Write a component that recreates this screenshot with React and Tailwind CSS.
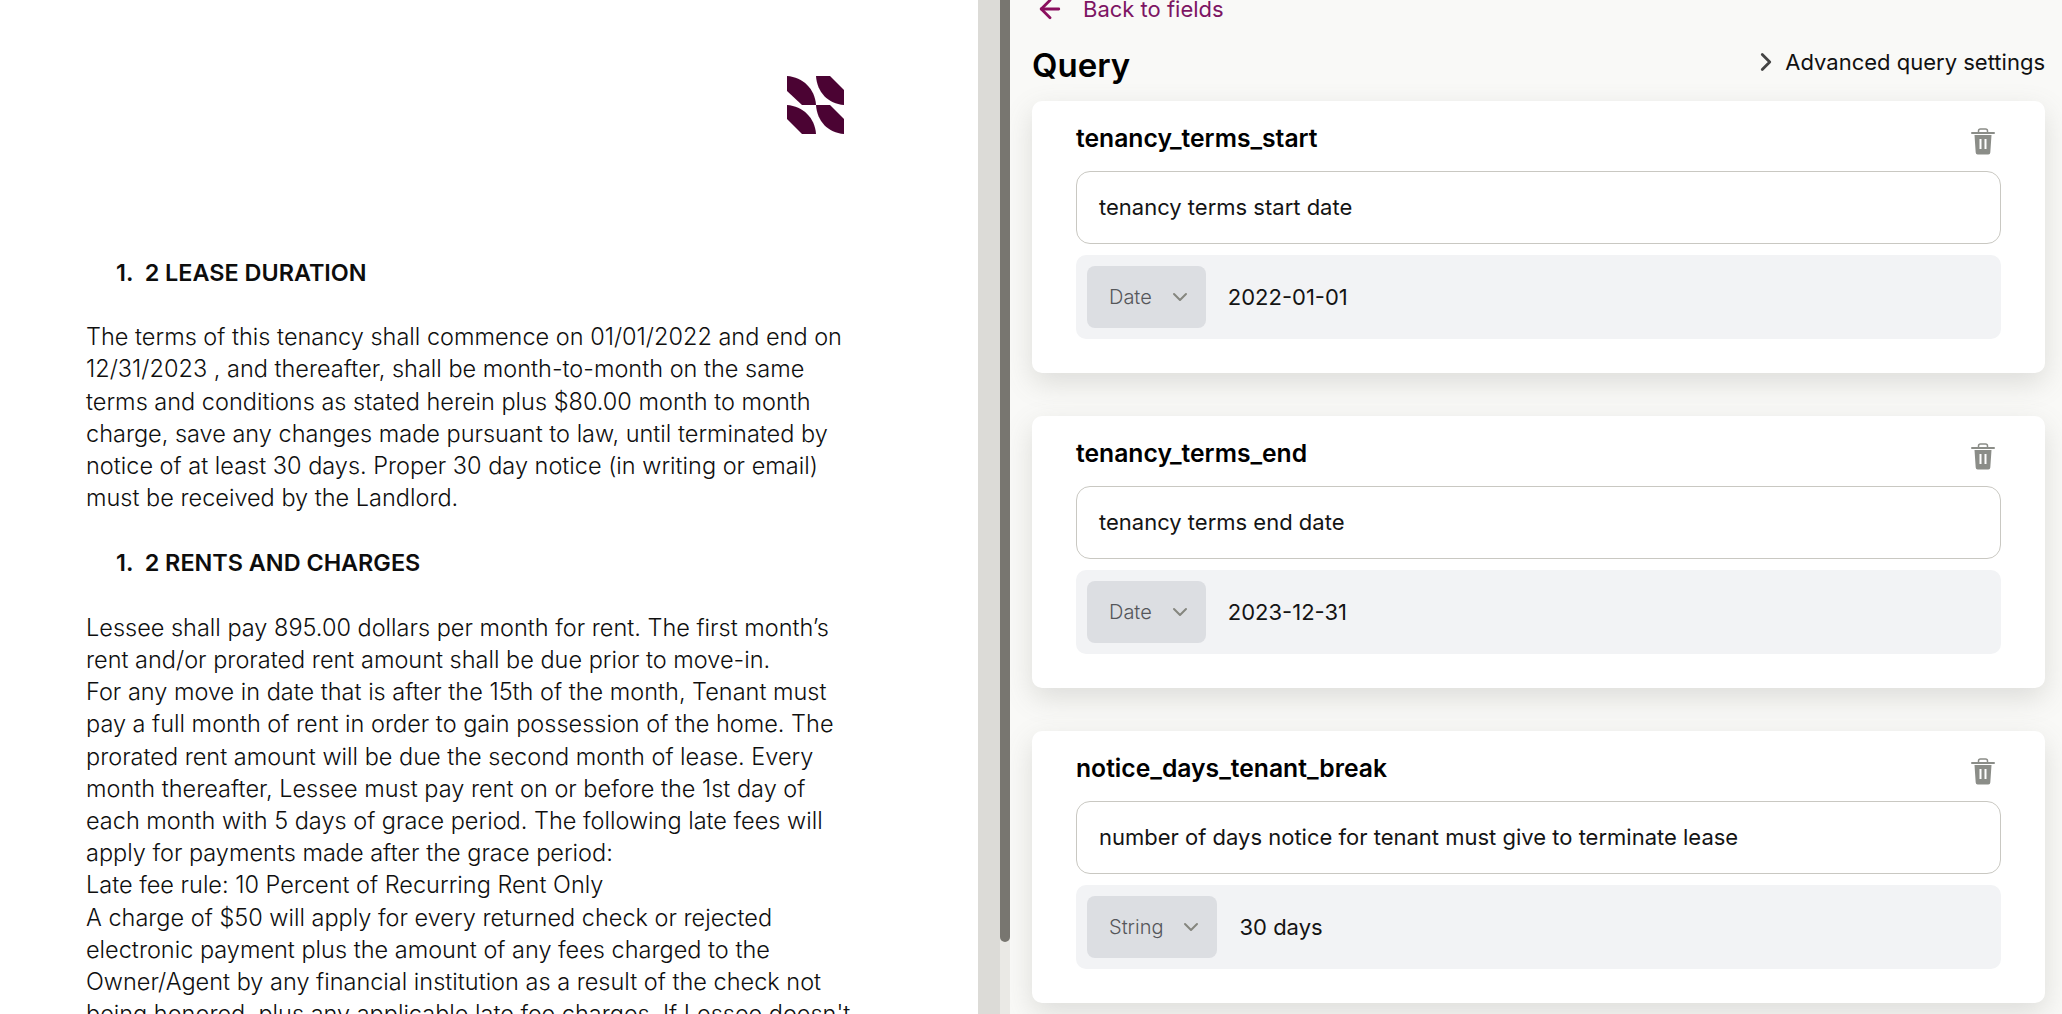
import React from 'react';
import { ArrowLeft, ChevronDown, ChevronRight } from 'lucide-react';

const font = { fontFamily: 'Inter, "Liberation Sans", sans-serif' };

const fields = [
  { name: 'tenancy_terms_start', query: 'tenancy terms start date', type: 'Date', value: '2022-01-01' },
  { name: 'tenancy_terms_end', query: 'tenancy terms end date', type: 'Date', value: '2023-12-31' },
  { name: 'notice_days_tenant_break', query: 'number of days notice for tenant must give to terminate lease', type: 'String', value: '30 days' },
];

const leaseLines = [
  'The terms of this tenancy shall commence on 01/01/2022 and end on',
  '12/31/2023 , and thereafter, shall be month-to-month on the same',
  'terms and conditions as stated herein plus $80.00 month to month',
  'charge, save any changes made pursuant to law, until terminated by',
  'notice of at least 30 days. Proper 30 day notice (in writing or email)',
  'must be received by the Landlord.',
];

const rentLines = [
  'Lessee shall pay 895.00 dollars per month for rent. The first month’s',
  'rent and/or prorated rent amount shall be due prior to move-in.',
  'For any move in date that is after the 15th of the month, Tenant must',
  'pay a full month of rent in order to gain possession of the home. The',
  'prorated rent amount will be due the second month of lease. Every',
  'month thereafter, Lessee must pay rent on or before the 1st day of',
  'each month with 5 days of grace period. The following late fees will',
  'apply for payments made after the grace period:',
  'Late fee rule: 10 Percent of Recurring Rent Only',
  'A charge of $50 will apply for every returned check or rejected',
  'electronic payment plus the amount of any fees charged to the',
  'Owner/Agent by any financial institution as a result of the check not',
  'being honored, plus any applicable late fee charges. If Lessee doesn\'t',
];

function Logo() {
  return (
    <svg width="58" height="58" viewBox="0 0 58 58" className="block">
      <g fill="#4b0333">
        <path d="M0 0C16 1 28 13 29 29H15L0 15Z" />
        <path d="M29 0H43L57 14V29C41 28 30 16 29 0Z" />
        <path d="M0 29C16 30 28 42 29 58H15L0 43Z" />
        <path d="M29 29H43L57 43V58C41 57 30 45 29 29Z" />
      </g>
    </svg>
  );
}

function TrashIcon() {
  return (
    <svg width="24" height="27" viewBox="0 0 24 27" className="block">
      <path d="M7.5 4V3a2 2 0 0 1 2-2h5a2 2 0 0 1 2 2v1" fill="none" stroke="#8b8d88" strokeWidth="1.5" />
      <rect x="0" y="4" width="24" height="2" rx="1" fill="#8b8d88" />
      <path fillRule="evenodd" d="M3.5 7h17l-1.2 17.5a2 2 0 0 1-2 1.9H6.7a2 2 0 0 1-2-1.9ZM8.5 11v10h2V11ZM13.5 11v10h2V11Z" fill="#8b8d88" />
    </svg>
  );
}

function FieldCard({ field }) {
  return (
    <div className="bg-white rounded-[10px] h-[272px] px-[44px] pt-[22px] shadow-[0_10px_28px_rgba(110,108,98,0.2)]">
      <div className="flex items-start justify-between h-[30px] pr-[6px]">
        <h3 className="text-[24.7px] leading-[30px] font-semibold text-black">{field.name}</h3>
        <span className="mt-[5px]"><TrashIcon /></span>
      </div>
      <div className="mt-[18px] h-[73px] rounded-[14px] border border-[#c9c8c2] flex items-center px-[22px] text-[22px] text-[#141414]">
        {field.query}
      </div>
      <div className="mt-[11px] h-[84px] rounded-[10px] bg-[#f2f3f5] flex items-center px-[11px] text-[22px] text-[#141414]">
        <div className="h-[62px] rounded-[8px] bg-[#dcdee2] flex items-center pl-[22px] pr-[14px] gap-[16px] text-[20px] font-light text-[#55565a]">
          {field.type}
          <ChevronDown size={24} strokeWidth={2} className="text-[#85867f]" />
        </div>
        <span className="ml-[22px]">{field.value}</span>
      </div>
    </div>
  );
}

export default function App() {
  return (
    <div style={font} className="flex h-[1014px] w-[2062px] overflow-hidden bg-white">
      <div className="w-[978px] shrink-0 overflow-hidden pl-[86px] pr-[120px]">
        <div className="flex justify-end pt-[76px] pr-[25px] -mr-[12px]">
          <Logo />
        </div>
        <h2 className="mt-[123px] pl-[30px] text-[23.4px] leading-[32px] font-semibold text-[#0d0d0d] whitespace-pre">1.  2 LEASE DURATION</h2>
        <div className="mt-[32px] text-[23.5px] leading-[32.3px] font-light text-[#0f0f0f] whitespace-nowrap">
          {leaseLines.map((line) => <div key={line}>{line}</div>)}
        </div>
        <h2 className="mt-[32px] pl-[30px] text-[23.4px] leading-[32px] font-semibold text-[#0d0d0d] whitespace-pre">1.  2 RENTS AND CHARGES</h2>
        <div className="mt-[33px] text-[23.5px] leading-[32.2px] font-light text-[#0f0f0f] whitespace-nowrap">
          {rentLines.map((line) => <div key={line}>{line}</div>)}
        </div>
      </div>

      <div className="w-[22px] shrink-0 bg-[#dcdbd7]" />
      <div className="w-[10px] shrink-0 bg-[#eae9e5]">
        <div className="h-[942px] bg-[#787670] rounded-b-[5px]" />
      </div>

      <div className="flex-1 bg-[#f9f9f7] pl-[22px] pr-[17px] overflow-hidden">
        <div className="flex items-center h-[28px] -mt-[5px] pl-[3px] text-[22px] text-[#7d1563]">
          <ArrowLeft size={30} strokeWidth={2.25} className="text-[#8a0f5e]" />
          <span className="ml-[18px]">Back to fields</span>
        </div>
        <div className="flex items-start justify-between mt-[23px] h-[38px]">
          <h1 className="text-[33px] leading-[38px] font-semibold text-black">Query</h1>
          <div className="flex items-center gap-[4px] h-[32px] text-[22px] text-[#111]">
            <ChevronRight size={30} strokeWidth={2.25} className="text-[#444]" />
            Advanced query settings
          </div>
        </div>
        <div className="mt-[17px] flex flex-col gap-[43px]">
          {fields.map((field) => <FieldCard key={field.name} field={field} />)}
        </div>
      </div>
    </div>
  );
}
